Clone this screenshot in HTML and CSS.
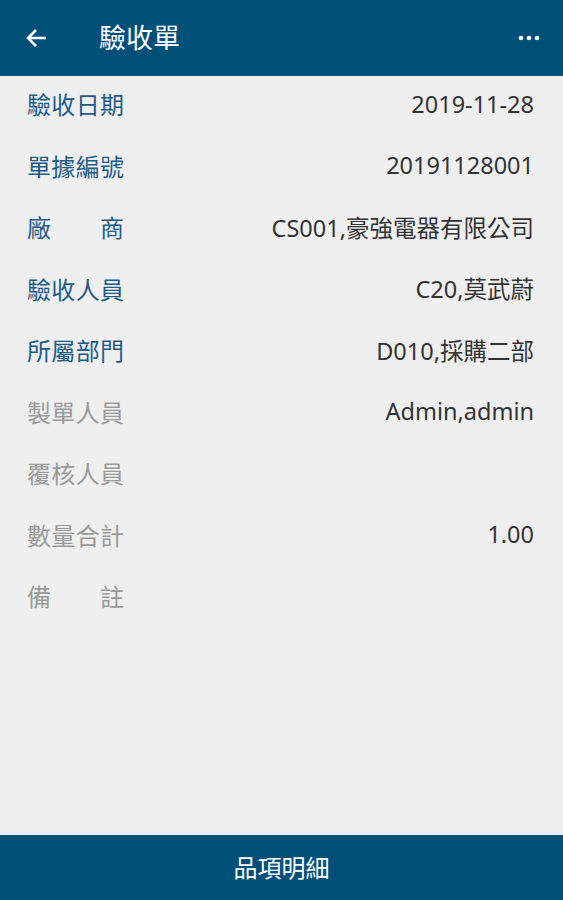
FILE: index.html
```html
<!DOCTYPE html>
<html lang="zh-Hant">

<head>
    <meta charset="UTF-8">
    <meta name="viewport" content="width=device-width, initial-scale=1.0">
    <title>驗收單</title>
    <link rel="stylesheet" href="styles.css">
</head>

<body>
    <div class="app">
        <div class="topbar">
            <span class="back">
                <svg width="22" height="20" viewBox="0 0 22 20">
                    <path d="M21 10H3M11 2L3 10l8 8" fill="none" stroke="#fff" stroke-width="2.6" />
                </svg>
            </span>
            <span class="title">驗收單</span>
            <span class="more">
                <svg width="22" height="6" viewBox="0 0 22 6">
                    <circle cx="3" cy="3" r="2.3" fill="#fff" />
                    <circle cx="11" cy="3" r="2.3" fill="#fff" />
                    <circle cx="19" cy="3" r="2.3" fill="#fff" />
                </svg>
            </span>
        </div>

        <div class="form">
            <div class="row"><span class="label">驗收日期</span><span class="value">2019-11-28</span></div>
            <div class="row"><span class="label">單據編號</span><span class="value">20191128001</span></div>
            <div class="row"><span class="label">廠商</span><span class="value">CS001,豪強電器有限公司</span></div>
            <div class="row"><span class="label">驗收人員</span><span class="value">C20,莫武蔚</span></div>
            <div class="row"><span class="label">所屬部門</span><span class="value">D010,採購二部</span></div>
            <div class="row"><span class="label grey">製單人員</span><span class="value">Admin,admin</span></div>
            <div class="row"><span class="label grey">覆核人員</span><span class="value"></span></div>
            <div class="row"><span class="label grey">數量合計</span><span class="value">1.00</span></div>
            <div class="row"><span class="label grey">備註</span><span class="value"></span></div>
        </div>

        <div class="bottombar">品項明細</div>
    </div>
</body>

</html>
```

FILE: styles.css
```css
body {
    margin: 0;
    background-color: #efefef;
    font-family: "Noto Sans", "Noto Sans CJK TC", sans-serif;
}

.app {
    display: flex;
    flex-direction: column;
    height: 900px;
}

.topbar {
    height: 76px;
    background-color: #004f78;
    display: flex;
    align-items: center;
    padding: 0 23px 0 25px;
    color: #fff;
    box-sizing: border-box;
}

.back {
    display: flex;
    width: 74px;
}

.title {
    font-size: 27px;
    flex: 1;
    margin-top: -4px;
}

.more {
    display: flex;
}

.form {
    flex: 1;
    padding: 0 29px 0 27px;
}

.row {
    height: 61.5px;
    display: flex;
    align-items: center;
    justify-content: space-between;
}

.label {
    width: 97px;
    font-size: 24px;
    color: #1d5c88;
    text-align: justify;
    text-align-last: justify;
    margin-top: -6px;
}

.label.grey {
    color: #9a9a9a;
}

.value {
    font-size: 23.5px;
    color: #333;
    margin-top: -6px;
}

.bottombar {
    height: 65px;
    background-color: #004f78;
    color: #fff;
    font-size: 24px;
    display: flex;
    align-items: center;
    justify-content: center;
    padding-bottom: 2px;
    box-sizing: border-box;
}
```
